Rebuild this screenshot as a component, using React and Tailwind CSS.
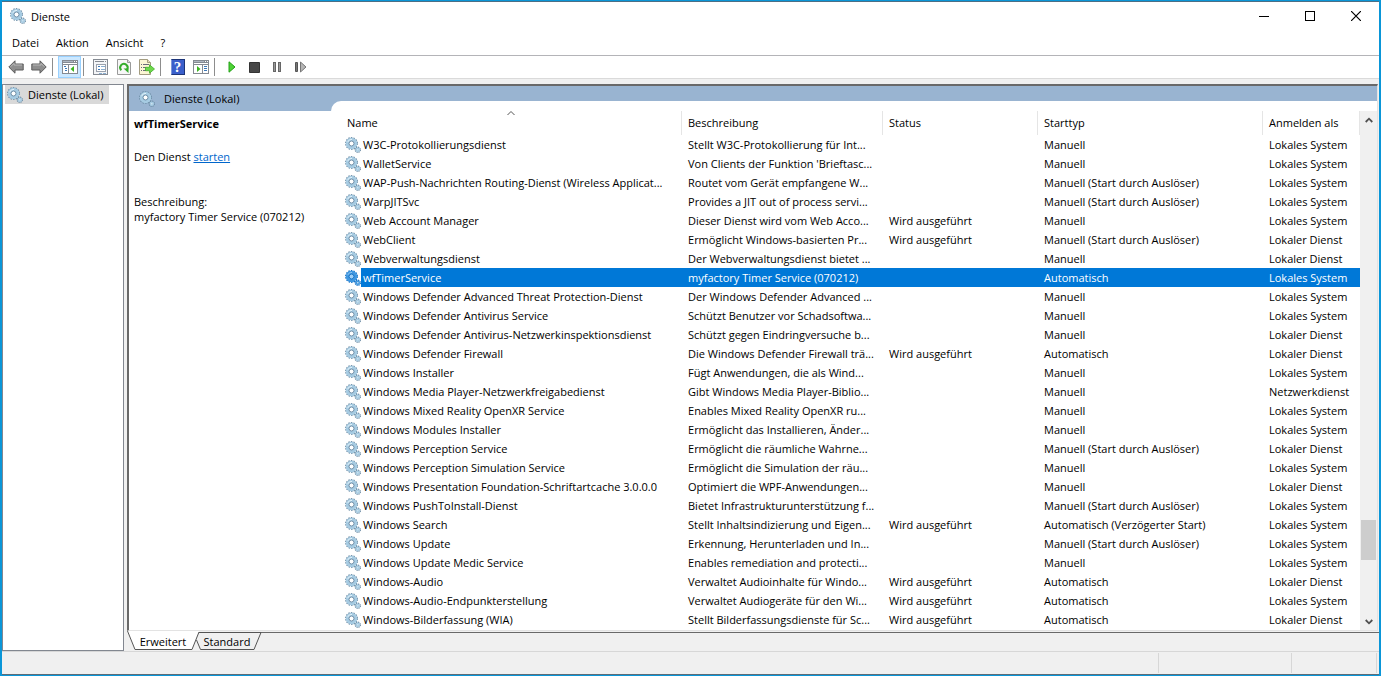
import { useState } from "react";
import clsx from "clsx";

const AUTO = "Automatisch";
const MAN = "Manuell";
const MAN_TRIGGER = "Manuell (Start durch Auslöser)";
const RUNNING = "Wird ausgeführt";
const SYSTEM = "Lokales System";
const LOCAL = "Lokaler Dienst";

const services = [
  ["W3C-Protokollierungsdienst", "Stellt W3C-Protokollierung für Int...", "", MAN, SYSTEM],
  ["WalletService", "Von Clients der Funktion 'Brieftasc...", "", MAN, SYSTEM],
  ["WAP-Push-Nachrichten Routing-Dienst (Wireless Applicat...", "Routet vom Gerät empfangene W...", "", MAN_TRIGGER, SYSTEM],
  ["WarpJITSvc", "Provides a JIT out of process servi...", "", MAN_TRIGGER, SYSTEM],
  ["Web Account Manager", "Dieser Dienst wird vom Web Acco...", RUNNING, MAN, SYSTEM],
  ["WebClient", "Ermöglicht Windows-basierten Pr...", RUNNING, MAN_TRIGGER, LOCAL],
  ["Webverwaltungsdienst", "Der Webverwaltungsdienst bietet ...", "", MAN, LOCAL],
  ["wfTimerService", "myfactory Timer Service (070212)", "", AUTO, SYSTEM],
  ["Windows Defender Advanced Threat Protection-Dienst", "Der Windows Defender Advanced ...", "", MAN, SYSTEM],
  ["Windows Defender Antivirus Service", "Schützt Benutzer vor Schadsoftwa...", "", MAN, SYSTEM],
  ["Windows Defender Antivirus-Netzwerkinspektionsdienst", "Schützt gegen Eindringversuche b...", "", MAN, LOCAL],
  ["Windows Defender Firewall", "Die Windows Defender Firewall trä...", RUNNING, AUTO, LOCAL],
  ["Windows Installer", "Fügt Anwendungen, die als Wind...", "", MAN, SYSTEM],
  ["Windows Media Player-Netzwerkfreigabedienst", "Gibt Windows Media Player-Biblio...", "", MAN, "Netzwerkdienst"],
  ["Windows Mixed Reality OpenXR Service", "Enables Mixed Reality OpenXR ru...", "", MAN, SYSTEM],
  ["Windows Modules Installer", "Ermöglicht das Installieren, Änder...", "", MAN, SYSTEM],
  ["Windows Perception Service", "Ermöglicht die räumliche Wahrne...", "", MAN_TRIGGER, LOCAL],
  ["Windows Perception Simulation Service", "Ermöglicht die Simulation der räu...", "", MAN, SYSTEM],
  ["Windows Presentation Foundation-Schriftartcache 3.0.0.0", "Optimiert die WPF-Anwendungen...", "", MAN, LOCAL],
  ["Windows PushToInstall-Dienst", "Bietet Infrastrukturunterstützung f...", "", MAN_TRIGGER, SYSTEM],
  ["Windows Search", "Stellt Inhaltsindizierung und Eigen...", RUNNING, "Automatisch (Verzögerter Start)", SYSTEM],
  ["Windows Update", "Erkennung, Herunterladen und In...", "", MAN_TRIGGER, SYSTEM],
  ["Windows Update Medic Service", "Enables remediation and protecti...", "", MAN, SYSTEM],
  ["Windows-Audio", "Verwaltet Audioinhalte für Windo...", RUNNING, AUTO, LOCAL],
  ["Windows-Audio-Endpunkterstellung", "Verwaltet Audiogeräte für den Wi...", RUNNING, AUTO, SYSTEM],
  ["Windows-Bilderfassung (WIA)", "Stellt Bilderfassungsdienste für Sc...", RUNNING, AUTO, LOCAL],
];

const Gears = ({ selected = false, className }) => {
  const edge = selected ? "#0f6fc4" : "#6d8da6";
  const body = selected ? "#3f97e0" : "#a6cbe2";
  return (
    <svg viewBox="0 0 16 16" className={clsx("h-4 w-4 shrink-0", className)} aria-hidden="true">
      <circle cx="6.5" cy="6.5" r="5.7" fill="none" stroke={edge} strokeWidth="1.5" strokeDasharray="1.5 1.05" />
      <circle cx="6.5" cy="6.5" r="4.1" fill="none" stroke={body} strokeWidth="3.2" />
      <circle cx="6.5" cy="6.5" r="2.5" fill={selected ? "#9fd0f7" : "#fff"} stroke={edge} strokeWidth="1" />
      <path d="M2.6 5.2A4.2 4.2 0 0 1 7 2.4" fill="none" stroke={selected ? "#8cc4f2" : "#e2f2fa"} strokeWidth="1" />
      <circle cx="12.8" cy="12.8" r="2.5" fill="none" stroke={edge} strokeWidth="1.4" strokeDasharray="1.2 .76" />
      <circle cx="12.8" cy="12.8" r="1.5" fill="#d4e6f0" stroke={body} strokeWidth="1.4" />
    </svg>
  );
};

const BackIcon = () => (
  <svg viewBox="0 0 16 14" className="h-3.5 w-4">
    <path d="M.8 7 7 .8V4h8.2v6H7v3.2z" fill="#8e8e8e" stroke="#5c5c5c" />
    <path d="M2.6 6.8 6 3.4V5h8" fill="none" stroke="#b9b9b9" />
  </svg>
);

const ForwardIcon = () => (
  <svg viewBox="0 0 16 14" className="h-3.5 w-4">
    <path d="M15.2 7 9 .8V4H.8v6H9v3.2z" fill="#8e8e8e" stroke="#5c5c5c" />
    <path d="M2 5h8V3.4l3.4 3.4" fill="none" stroke="#b9b9b9" />
  </svg>
);

const TreeIcon = () => (
  <svg viewBox="0 0 16 14" className="h-3.5 w-4" shapeRendering="crispEdges">
    <path d="M0 0h16v14H0z" fill="#858a92" />
    <path d="M1 3h14v1H1zM1 5h5v8H1zM7 5h8v8H7z" fill="#fff" />
    <path d="M1 1h10v1H1z" fill="#aeb6c1" />
    <path d="M12 1h1v1h-1zM14 1h1v1h-1z" fill="#fff" />
    <path d="M2 6h2v1H2zM3 8h2v1H3zM3 10h2v1H3z" fill="#3c78b8" />
    <path d="M12 6v6L8.500 9z" fill="#3cb521" shapeRendering="auto" />
  </svg>
);

const PropertiesIcon = () => (
  <svg viewBox="0 0 16 16" className="h-4 w-4" shapeRendering="crispEdges">
    <path d="M.5.5h14v15H.5z" fill="#f4f5f7" stroke="#858a92" />
    <path d="M2 2h9v1H2zM12 2h1v1h-1z" fill="#858a92" />
    <path d="M3.5 5.5h9v7h-9z" fill="#fff" stroke="#9ba2ad" />
    <path d="M5 7h2v1H5zM5 10h2v1H5z" fill="#3c78b8" />
    <path d="M8 7h4v1H8zM8 10h4v1H8zM6 14h3v1H6zM10 14h3v1h-3z" fill="#8aaed0" />
  </svg>
);

const RefreshIcon = () => (
  <svg viewBox="0 0 14 16" className="h-4 w-3.5">
    <path d="M.5.5h10l3 3v12H.5z" fill="#f7f7f7" stroke="#9a9a9a" />
    <path d="M10.5.5v3h3" fill="#ddd" stroke="#9a9a9a" />
    <path d="M4.3 11.2A3.7 3.7 0 1 1 10 10.6" fill="none" stroke="#35ad2c" strokeWidth="2" />
    <path d="M6.5 9.5h5v4.4z" fill="#35ad2c" />
  </svg>
);

const ExportIcon = () => (
  <svg viewBox="0 0 16 16" className="h-4 w-4">
    <path d="M.5.5h8l3 3v12H.5z" fill="#fcf6d4" stroke="#a39c80" />
    <path d="M8.5.5v3h3" fill="#e8dfb8" stroke="#a39c80" />
    <path d="M2 5.5h1M2 8.5h1M2 11.5h1M4 5.5h6M4 8.5h3M4 11.5h3" stroke="#6b6b78" />
    <path d="M6.5 8.3h4V5.8L15.5 10l-5 4.2v-2.500h-4z" fill="#6fd84c" stroke="#3fae27" strokeWidth=".8" />
  </svg>
);

const HelpIcon = () => (
  <span className="flex h-4 w-3.5 items-center justify-center border border-[#1c3478] border-l-[#7d97d8] bg-[#3a5fcb] font-['Liberation_Serif',serif] text-[15px] leading-4 font-bold text-white">
    ?
  </span>
);

const ActionPaneIcon = () => (
  <svg viewBox="0 0 16 14" className="h-3.5 w-4" shapeRendering="crispEdges">
    <path d="M0 0h16v14H0z" fill="#858a92" />
    <path d="M1 3h14v1H1zM1 5h8v8H1zM10 5h5v8h-5z" fill="#fff" />
    <path d="M1 1h10v1H1z" fill="#aeb6c1" />
    <path d="M12 1h1v1h-1zM14 1h1v1h-1z" fill="#fff" />
    <path d="M11 6h3v1h-3zM11 8h3v1h-3zM11 10h3v1h-3z" fill="#3c78b8" />
    <path d="M4 6v6l3.500-3z" fill="#3cb521" shapeRendering="auto" />
  </svg>
);

const PlayIcon = () => (
  <svg viewBox="0 0 8 12" className="h-3 w-2">
    <path d="M1 .8 7 6l-6 5.200z" fill="#4fd336" stroke="#22a016" />
  </svg>
);

const StopIcon = () => (
  <svg viewBox="0 0 11 11" className="h-[11px] w-[11px]">
    <path d="M.5.5h10v10H.5z" fill="#474747" stroke="#333" strokeLinejoin="round" />
  </svg>
);

const PauseIcon = () => (
  <svg viewBox="0 0 9 10" className="h-2.5 w-[9px]" shapeRendering="crispEdges">
    <path d="M.5.5h2v9h-2zM5.5.5h2v9h-2z" fill="#999" stroke="#666" />
  </svg>
);

const RestartIcon = () => (
  <svg viewBox="0 0 12 12" className="h-3 w-3">
    <path d="M.5 1.5h2v9h-2z" fill="#777" stroke="#555" />
    <path d="M5.5 1 11 6l-5.500 5z" fill="#b5b5b5" stroke="#777" />
  </svg>
);

const toolbar = [
  [
    { label: "Zurück", icon: BackIcon },
    { label: "Vorwärts", icon: ForwardIcon },
  ],
  [{ label: "Konsolenstruktur ein-/ausblenden", icon: TreeIcon, active: true }],
  [
    { label: "Eigenschaften", icon: PropertiesIcon },
    { label: "Aktualisieren", icon: RefreshIcon },
    { label: "Liste exportieren", icon: ExportIcon },
  ],
  [
    { label: "Hilfe", icon: HelpIcon },
    { label: "Aktionsbereich ein-/ausblenden", icon: ActionPaneIcon },
  ],
  [
    { label: "Dienst starten", icon: PlayIcon },
    { label: "Dienst beenden", icon: StopIcon },
    { label: "Dienst anhalten", icon: PauseIcon },
    { label: "Dienst neu starten", icon: RestartIcon },
  ],
];

const TitleBar = () => (
  <header className="flex h-7 shrink-0 items-center pl-2">
    <Gears />
    <h1 className="ml-[5px] flex-1">Dienste</h1>
    <button type="button" aria-label="Minimieren" className="flex h-full w-[46px] items-center justify-center">
      <svg viewBox="0 0 10 10" className="h-2.5 w-2.5" shapeRendering="crispEdges">
        <path d="M0 5h10v1H0z" />
      </svg>
    </button>
    <button type="button" aria-label="Maximieren" className="flex h-full w-[46px] items-center justify-center">
      <svg viewBox="0 0 10 10" className="h-2.5 w-2.5" shapeRendering="crispEdges">
        <path d="M.5.5h9v9h-9z" fill="none" stroke="#000" />
      </svg>
    </button>
    <button type="button" aria-label="Schließen" className="flex h-full w-[46px] items-center justify-center">
      <svg viewBox="0 0 10 10" className="h-2.5 w-2.5">
        <path d="m0 0 10 10M10 0 0 10" stroke="#000" strokeWidth="1.200" />
      </svg>
    </button>
  </header>
);

const MenuBar = () => (
  <nav className="flex h-[25px] shrink-0 items-center gap-[17px] pl-[10px]">
    {["Datei", "Aktion", "Ansicht", "?"].map((item) => (
      <button key={item} type="button">
        {item}
      </button>
    ))}
  </nav>
);

const Toolbar = () => (
  <div role="toolbar" className="flex h-6 shrink-0 items-center border-y border-t-[#b4b4b8] border-b-[#dadada] pl-0.5">
    {toolbar.map((group, i) => (
      <div key={i} className="flex items-center">
        {i > 0 && <span className="mr-[5px] ml-0.5 h-[18px] w-px bg-[#8d8d8d]" />}
        {group.map(({ label, icon: Icon, active }) => (
          <button
            key={label}
            type="button"
            aria-label={label}
            className={clsx(
              "flex h-[22px] w-[23px] items-center justify-center",
              active && "border border-[#99d1ff] bg-[#cce8ff]"
            )}
          >
            <Icon />
          </button>
        ))}
      </div>
    ))}
  </div>
);

const headCell = "h-6 border-r border-[#e5e5e5] pb-0.5 pl-1.5 text-left font-normal";
const cell = "h-[19px] overflow-hidden pl-1.5 whitespace-nowrap";

const ServiceTable = ({ selected, onSelect }) => (
  <table className="w-full table-fixed border-separate border-spacing-0">
    <colgroup>
      <col className="w-5" />
      <col className="w-[321px]" />
      <col className="w-[201px]" />
      <col className="w-[155px]" />
      <col className="w-[225px]" />
      <col />
    </colgroup>
    <thead>
      <tr>
        <th colSpan={2} className={clsx(headCell, "relative")} aria-sort="ascending">
          Name
          <svg viewBox="0 0 8 4" className="absolute top-0 left-1/2 -ml-1 h-1 w-2">
            <path d="m.5 4 3.500-3.500L7.500 4" fill="none" stroke="#555" />
          </svg>
        </th>
        <th className={headCell}>Beschreibung</th>
        <th className={headCell}>Status</th>
        <th className={headCell}>Starttyp</th>
        <th className={headCell}>Anmelden als</th>
      </tr>
    </thead>
    <tbody>
      {services.map(([name, description, status, startType, account]) => {
        const active = name === selected;
        const tone = active && "bg-[#0078d7] text-white";
        return (
          <tr key={name} onClick={() => onSelect(name)}>
            <td className="h-[19px] pl-1">
              <Gears selected={active} />
            </td>
            <td className={clsx("h-[19px] overflow-hidden pl-0.5 whitespace-nowrap", tone)}>{name}</td>
            <td className={clsx(cell, tone)}>{description}</td>
            <td className={clsx(cell, tone)}>{status}</td>
            <td className={clsx(cell, tone)}>{startType}</td>
            <td className={clsx(cell, tone)}>{account}</td>
          </tr>
        );
      })}
    </tbody>
  </table>
);

const ScrollBar = () => (
  <div className="flex w-[17px] shrink-0 flex-col bg-[#f0f0f0]">
    <button type="button" aria-label="Nach oben" className="flex h-[17px] items-center justify-center">
      <svg viewBox="0 0 8 6" className="h-1.5 w-2">
        <path d="m.7 5 3.300-3.300L7.300 5" fill="none" stroke="#505050" strokeWidth="1.800" />
      </svg>
    </button>
    <div className="flex-1" />
    <div className="mx-px h-10 bg-[#cdcdcd]" />
    <div className="h-[53px]" />
    <button type="button" aria-label="Nach unten" className="flex h-[17px] items-center justify-center">
      <svg viewBox="0 0 8 6" className="h-1.5 w-2">
        <path d="M.7 1 4 4.300 7.300 1" fill="none" stroke="#505050" strokeWidth="1.800" />
      </svg>
    </button>
  </div>
);

const ViewTabs = () => (
  <div role="tablist" className="flex h-5 shrink-0">
    <button type="button" role="tab" aria-selected="true" className="relative h-5 w-[72px]">
      <svg viewBox="0 0 72 20" className="absolute inset-0 h-5 w-[72px]">
        <path d="M0 0h72l-7 18.500H8z" fill="#fff" />
        <path d="M.5 0 8 18.500h57L72 1" fill="none" stroke="#555" />
      </svg>
      <span className="relative">Erweitert</span>
    </button>
    <button type="button" role="tab" aria-selected="false" className="relative h-5 w-[62px] pr-1.5">
      <svg viewBox="0 0 62 20" className="absolute inset-0 h-5 w-[62px] overflow-visible">
        <path d="M0 1.500h62L55 18.500H1.500L-2.500 9" fill="none" stroke="#555" />
      </svg>
      <span className="relative">Standard</span>
    </button>
    <div className="mt-px flex-1 border-t border-[#696969]" />
  </div>
);

const App = () => {
  const [selected, setSelected] = useState("wfTimerService");

  return (
    <div className="flex min-h-screen flex-col border-x-2 border-y border-[#0a96d8] bg-white font-['Open_Sans','Noto_Sans',sans-serif] text-[11px] leading-[15px] text-black">
      <div className="flex flex-1 flex-col border-t border-b border-t-[#4b6f86] border-b-[#5b6c78]">
        <TitleBar />
        <MenuBar />
        <Toolbar />

        <main className="flex flex-1 gap-[3px] bg-[#f0f0f0] pt-[5px]">
          <aside className="w-[122px] shrink-0 border border-[#828790] bg-white pl-0.5">
            <button type="button" className="flex h-[19px] items-center gap-[5px] bg-[#d9d9d9] pr-1.5 pl-0.5 whitespace-nowrap">
              <Gears />
              Dienste (Lokal)
            </button>
          </aside>

          <div className="flex min-w-0 flex-1 flex-col">
            <section className="mr-px flex flex-1 border-t-2 border-r border-b border-l-2 border-t-[#696969] border-r-[#e3e3e3] border-b-[#e3e3e3] border-l-[#696969] bg-[#99b4d1]">
              <div className="flex w-[202px] shrink-0 flex-col">
                <div className="flex h-[25px] items-center gap-[9px] pl-[10px]">
                  <Gears />
                  <h2>Dienste (Lokal)</h2>
                </div>
                <div className="flex-1 bg-white pt-[5px] pl-[5px] whitespace-nowrap">
                  <h3 className="font-bold">{selected}</h3>
                  <p className="mt-[18px]">
                    Den Dienst{" "}
                    <a href="#starten" className="text-[#0066cc] underline">
                      starten
                    </a>
                  </p>
                  <p className="mt-[30px]">Beschreibung:</p>
                  <p>{services.find(([name]) => name === selected)[1]}</p>
                </div>
              </div>
              <div className="flex min-w-0 flex-1 flex-col pt-[15px]">
                <div className="flex flex-1 rounded-tl-[10px] bg-white pt-[10px] pl-[10px]">
                  <div className="min-w-0 flex-1">
                    <ServiceTable selected={selected} onSelect={setSelected} />
                  </div>
                  <ScrollBar />
                </div>
              </div>
            </section>
            <ViewTabs />
          </div>
        </main>

        <footer className="flex h-[23px] shrink-0 justify-end border-t border-[#d7d7d7] bg-[#f0f0f0] py-px pr-0.5">
          <div className="w-[133px] border-l border-[#d7d7d7]" />
          <div className="w-[86px] border-x border-[#d7d7d7]" />
        </footer>
      </div>
    </div>
  );
};

export default App;
